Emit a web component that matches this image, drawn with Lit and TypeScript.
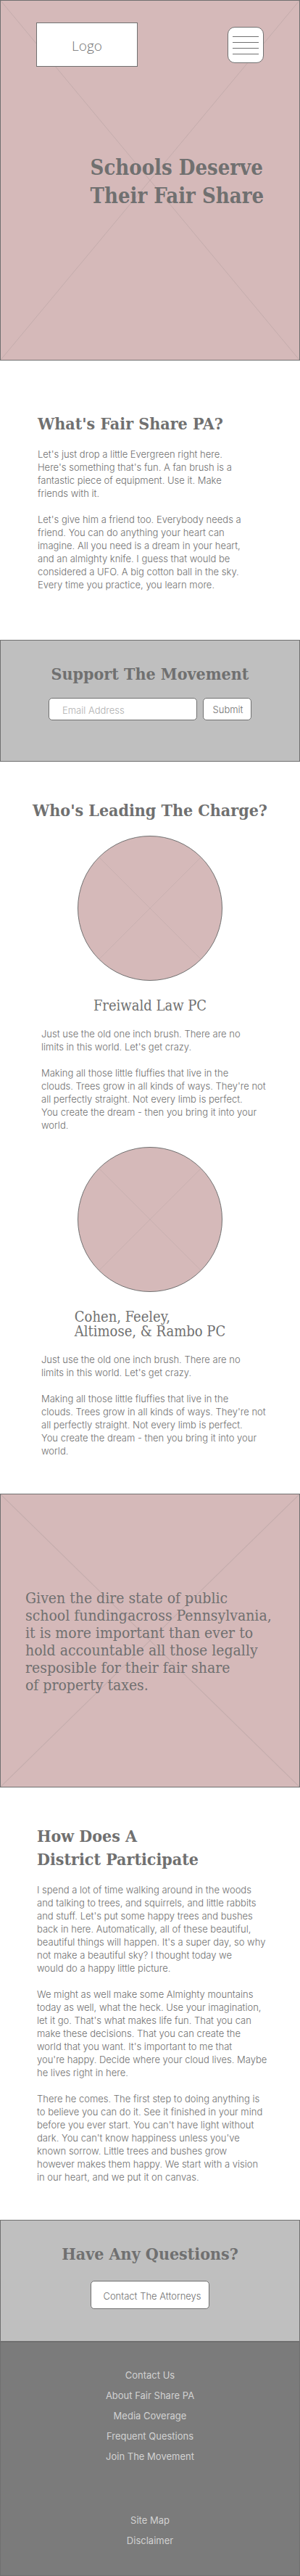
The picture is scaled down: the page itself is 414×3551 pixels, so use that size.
import { LitElement, html, css, svg } from "lit";
import { customElement } from "lit/decorators.js";

/** Renders a list of lines with a break between each of them. */
const lines = (rows: string[]) =>
  rows.map((row, i) => (i ? html`<br />${row}` : html`${row}`));

const paragraphs = (items: string[][]) =>
  items.map((rows) => html`<p class="text">${lines(rows)}</p>`);

/** Diagonal cross that marks an image placeholder. */
const cross = html`<svg class="cross" viewBox="0 0 100 100" preserveAspectRatio="none" aria-hidden="true">
  ${svg`<path d="M0 0L100 100M100 0L0 100" vector-effect="non-scaling-stroke" />`}
</svg>`;

const ABOUT = [
  [
    "Let's just drop a little Evergreen right here.",
    "Here's something that's fun. A fan brush is a",
    "fantastic piece of equipment. Use it. Make",
    "friends with it.",
  ],
  [
    "Let's give him a friend too. Everybody needs a",
    "friend. You can do anything your heart can",
    "imagine. All you need is a dream in your heart,",
    "and an almighty knife. I guess that would be",
    "considered a UFO. A big cotton ball in the sky.",
    "Every time you practice, you learn more.",
  ],
];

const BIO = [
  [
    "Just use the old one inch brush. There are no",
    "limits in this world. Let's get crazy.",
  ],
  [
    "Making all those little fluffies that live in the",
    "clouds. Trees grow in all kinds of ways. They're not",
    "all perfectly straight. Not every limb is perfect.",
    "You create the dream - then you bring it into your",
    "world.",
  ],
];

const LEADERS = [
  ["Freiwald Law PC"],
  ["Cohen, Feeley,", "Altimose, & Rambo PC"],
];

const QUOTE = [
  "Given the dire state of public",
  "school fundingacross Pennsylvania,",
  "it is more important than ever to",
  "hold accountable all those legally",
  "resposible for their fair share",
  "of property taxes.",
];

const PARTICIPATE = [
  [
    "I spend a lot of time walking around in the woods",
    "and talking to trees, and squirrels, and little rabbits",
    "and stuff. Let's put some happy trees and bushes",
    "back in here. Automatically, all of these beautiful,",
    "beautiful things will happen. It's a super day, so why",
    "not make a beautiful sky? I thought today we",
    "would do a happy little picture.",
  ],
  [
    "We might as well make some Almighty mountains",
    "today as well, what the heck. Use your imagination,",
    "let it go. That's what makes life fun. That you can",
    "make these decisions. That you can create the",
    "world that you want. It's important to me that",
    "you're happy. Decide where your cloud lives. Maybe",
    "he lives right in here.",
  ],
  [
    "There he comes. The first step to doing anything is",
    "to believe you can do it. See it finished in your mind",
    "before you ever start. You can't have light without",
    "dark. You can't know happiness unless you've",
    "known sorrow. Little trees and bushes grow",
    "however makes them happy. We start with a vision",
    "in our heart, and we put it on canvas.",
  ],
];

const LINKS = [
  "Contact Us",
  "About Fair Share PA",
  "Media Coverage",
  "Frequent Questions",
  "Join The Movement",
];

const LEGAL = ["Site Map", "Disclaimer"];

@customElement("app-root")
export class AppRoot extends LitElement {
  static styles = css`
    :host {
      display: block;
      background: #fff;
      color: #707070;
      font: 300 13px/18px Inter, "Open Sans", sans-serif;
    }
    *, *::before, *::after { box-sizing: border-box; }
    h1, h2, h3, p, ul { margin: 0; padding: 0; }
    ul { list-style: none; }
    h1, h2, h3, .quote-text {
      font-family: "DejaVu Serif Condensed", "DejaVu Serif", serif;
    }
    h1 { font-size: 29px; line-height: 39px; font-weight: 700; }
    h2 { font-size: 23px; line-height: 32px; font-weight: 700; }
    h3 { font-size: 20px; line-height: 20px; font-weight: 400; }
    .text + .text { margin-top: 18px; }

    .picture {
      display: grid;
      background: #d5b9b9;
      border: 1px solid #707070;
    }
    .picture > * { grid-area: 1 / 1; }
    .cross {
      width: 100%;
      height: 100%;
      min-height: 0;
      contain: size;
      fill: none;
      stroke: #707070;
      stroke-opacity: 0.17;
    }

    .hero-body { padding: 30px 49px 206px; }
    .top {
      display: flex;
      justify-content: space-between;
      align-items: flex-end;
    }
    .logo {
      display: flex;
      align-items: center;
      justify-content: center;
      width: 140px;
      height: 61px;
      background: #fff;
      border: 1px solid #707070;
      color: #707070;
      font: 350 19px/24px "Open Sans", "Noto Sans", sans-serif;
      text-decoration: none;
      padding-top: 2px;
    }
    .menu {
      width: 50px;
      height: 50px;
      margin: 0 0 5px;
      padding: 0;
      background: #fff;
      border: 1px solid #707070;
      border-radius: 10px;
    }
    .menu svg {
      display: block;
      width: 48px;
      height: 48px;
      stroke: #707070;
      shape-rendering: crispEdges;
    }
    .hero-title {
      display: flex;
      justify-content: flex-end;
      margin-top: 120px;
    }

    .about { padding: 71px 52px 67px; }
    .about h2, .participate h2 { margin-bottom: 17px; }

    .band {
      display: flex;
      flex-direction: column;
      align-items: center;
      background: #bfbfbf;
      border: 1px solid #707070;
    }
    .support { padding: 30px 16px 56px; gap: 17px; }
    .signup { display: flex; gap: 8px; width: 100%; max-width: 280px; }
    .field, .button {
      height: 31px;
      background: #fff;
      border: 1px solid #707070;
      border-radius: 5px;
      color: #707070;
      font: inherit;
      margin: 0;
    }
    .field { flex: 1; min-width: 0; padding: 2px 18px 0; }
    .field::placeholder { color: #b0b0b0; opacity: 1; }
    .button { width: 67px; padding: 0 0 0 2px; }
    .button.wide { width: 164px; height: 39px; padding: 2px 0 0 6px; }

    .leaders { padding: 51px 16px 50px; }
    .leaders h2 { text-align: center; margin-bottom: 19px; }
    .leader {
      display: grid;
      justify-items: center;
      row-gap: 20px;
    }
    .leader + .leader { margin-top: 21px; }
    .portrait {
      width: 200px;
      height: 200px;
      border-radius: 50%;
      overflow: hidden;
      margin-bottom: 4px;
    }
    .portrait .cross { stroke-opacity: 0.12; }
    .bio { width: 100%; padding-left: 41px; }

    .quote-text {
      font-size: 21px;
      line-height: 24px;
      font-weight: 400;
      padding: 131px 16px 128px 34px;
    }

    .participate { padding: 51px 40px 50px 51px; }

    .questions { padding: 30px 16px 44px; gap: 21px; }

    .footer {
      background: #7b7b7b;
      border: 1px solid #707070;
      padding: 31px 16px 34px;
      text-align: center;
      line-height: 28px;
    }
    .footer ul + ul { margin-top: 60px; }
    .footer a { color: #d2d2d2; font-weight: 400; text-decoration: none; }
  `;

  private renderLinks(items: string[]) {
    return html`<ul>${items.map((item) => html`<li><a href="#">${item}</a></li>`)}</ul>`;
  }

  render() {
    return html`
      <header class="picture">
        ${cross}
        <div class="hero-body">
          <div class="top">
            <a class="logo" href="#">Logo</a>
            <button class="menu" type="button" aria-label="Menu">
              <svg viewBox="0 0 48 48" aria-hidden="true">
                <path d="M6 12.5H42M6 20.5H42M6 28.5H42M6 36.5H42" />
              </svg>
            </button>
          </div>
          <div class="hero-title">
            <h1>${lines(["Schools Deserve", "Their Fair Share"])}</h1>
          </div>
        </div>
      </header>

      <main>
        <section class="about">
          <h2>What's Fair Share PA?</h2>
          ${paragraphs(ABOUT)}
        </section>

        <section class="band support">
          <h2>Support The Movement</h2>
          <form class="signup" @submit=${(e: Event) => e.preventDefault()}>
            <input class="field" type="email" aria-label="Email Address" placeholder="Email Address" />
            <button class="button" type="submit">Submit</button>
          </form>
        </section>

        <section class="leaders">
          <h2>Who's Leading The Charge?</h2>
          ${LEADERS.map(
            (name) => html`<article class="leader">
              <div class="picture portrait">${cross}</div>
              <h3>${lines(name)}</h3>
              <div class="bio">${paragraphs(BIO)}</div>
            </article>`
          )}
        </section>

        <section class="picture">
          ${cross}
          <p class="quote-text">${lines(QUOTE)}</p>
        </section>

        <section class="participate">
          <h2>${lines(["How Does A", "District Participate"])}</h2>
          ${paragraphs(PARTICIPATE)}
        </section>

        <section class="band questions">
          <h2>Have Any Questions?</h2>
          <button class="button wide" type="button">Contact The Attorneys</button>
        </section>
      </main>

      <footer class="footer">
        ${this.renderLinks(LINKS)} ${this.renderLinks(LEGAL)}
      </footer>
    `;
  }
}
